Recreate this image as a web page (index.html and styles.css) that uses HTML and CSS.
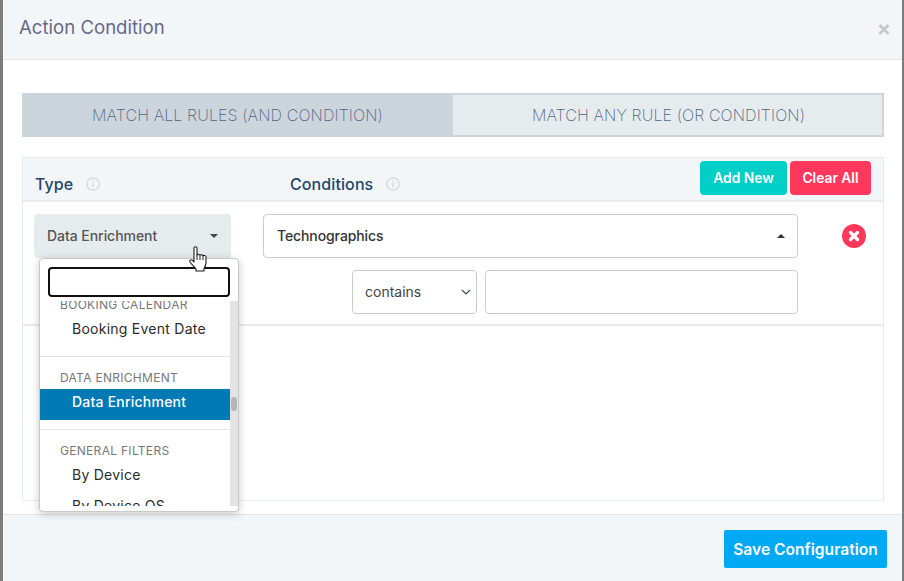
FILE: index.html
```html
<!DOCTYPE html>
<html lang="en">
<head>
<meta charset="utf-8">
<title>Action Condition</title>
<link rel="stylesheet" href="styles.css">
</head>
<body>
<div class="modal">
  <header class="modal-header">
    <h1 class="modal-title">Action Condition</h1>
    <span class="modal-close">×</span>
  </header>
  <main class="modal-body">
    <div class="tabs">
      <div class="tab tab-active">MATCH ALL RULES (AND CONDITION)</div>
      <div class="tab tab-idle">MATCH ANY RULE (OR CONDITION)</div>
    </div>
    <section class="panel">
      <div class="panel-head">
        <div class="col-type"><span class="col-label">Type</span><svg class="info" viewBox="0 0 14 14"><circle cx="7" cy="7" r="6.2" fill="none" stroke="#cfd7de" stroke-width="1.3"/><rect x="6.3" y="6" width="1.4" height="4.4" fill="#cfd7de"/><rect x="6.3" y="3.6" width="1.4" height="1.4" fill="#cfd7de"/></svg></div>
        <div class="col-cond"><span class="col-label">Conditions</span><svg class="info" viewBox="0 0 14 14"><circle cx="7" cy="7" r="6.2" fill="none" stroke="#cfd7de" stroke-width="1.3"/><rect x="6.3" y="6" width="1.4" height="4.4" fill="#cfd7de"/><rect x="6.3" y="3.6" width="1.4" height="1.4" fill="#cfd7de"/></svg></div>
        <div class="head-actions">
          <button class="btn btn-add">Add New</button>
          <button class="btn btn-clear">Clear All</button>
        </div>
      </div>
      <div class="rule">
        <div class="type-select"><span>Data Enrichment</span><i class="caret-down"></i></div>
        <div class="rule-main">
          <div class="cond-select"><span>Technographics</span><i class="caret-up"></i></div>
          <div class="cond-sub">
            <div class="op-select"><span>contains</span><svg class="chev" viewBox="0 0 10 6"><path d="M1 1l4 4 4-4" fill="none" stroke="#2f4f4f" stroke-width="1.1"/></svg></div>
            <div class="value-input"></div>
          </div>
        </div>
        <div class="rule-del"><svg viewBox="0 0 24 24"><circle cx="12" cy="12" r="12" fill="#ff385c"/><path d="M8.500 8.500l7 7M15.500 8.500l-7 7" stroke="#fff" stroke-width="3.200" stroke-linecap="round"/></svg></div>
      </div>
    </section>
  </main>
  <footer class="modal-footer">
    <button class="btn-save">Save Configuration</button>
  </footer>
</div>

<div class="menu">
  <div class="menu-search"></div>
  <div class="menu-scroll">
    <div class="menu-list">
      <div class="group-label group-first">BOOKING CALENDAR</div>
      <div class="item">Booking Event Date</div>
      <div class="divider"></div>
      <div class="group-label">DATA ENRICHMENT</div>
      <div class="item item-active">Data Enrichment</div>
      <div class="divider"></div>
      <div class="group-label">GENERAL FILTERS</div>
      <div class="item">By Device</div>
      <div class="item">By Device OS</div>
    </div>
    <div class="scrollbar"><div class="thumb"></div></div>
  </div>
</div>

<svg class="cursor" viewBox="0 0 18 27"><path d="M5 2c0-1.600 3-1.600 3 0v7c.6-1 2.400-1 3 .3.600-.8 2.400-.8 3 .4.600-.6 3-.5 3 1.300v6c0 2-1 4-2 5.500V25H7v-2C5.500 21 3 19 1 16c-.9-1.500.8-3 2.400-1.800L5 16z" fill="#fff" stroke="#1c1c1c" stroke-width="1.100" stroke-linejoin="round"/><path d="M8 9v5M11 9.300V14M14 9.700V14" stroke="#1c1c1c" stroke-width="1" fill="none"/></svg>
</body>
</html>
```
FILE: styles.css
```css
* { box-sizing: border-box; }
html, body { margin: 0; padding: 0; }
body {
  width: 904px;
  height: 581px;
  overflow: hidden;
  background: #7c7c7c;
  font-family: Inter, "Liberation Sans", sans-serif;
  padding: 0 2px 0 3px;
  position: relative;
}
.modal {
  height: 581px;
  background: #fff;
  display: flex;
  flex-direction: column;
}
.modal-header {
  height: 60px;
  flex: none;
  background: #f3f6f8;
  border-bottom: 1px solid #e4e7ea;
  display: flex;
  align-items: center;
  justify-content: space-between;
  padding: 0 11px 5px 16px;
}
.modal-title {
  margin: 0;
  font-size: 18.6px;
  font-weight: 400;
  color: #68688a;
}
.modal-close {
  font-size: 21px;
  font-weight: 700;
  color: #c8c8c8;
  line-height: 1;
  margin-top: 3px;
}
.modal-body {
  flex: 1;
  padding: 33px 18px 13px 19px;
  display: flex;
  flex-direction: column;
  gap: 20px;
}
.tabs {
  display: flex;
  height: 44px;
  flex: none;
}
.tab {
  display: flex;
  align-items: center;
  justify-content: center;
  font-size: 16px;
  font-weight: 200;
  letter-spacing: .1px;
  color: #4f6585;
}
.tab-active {
  width: 431px;
  background: #cdd5dc;
}
.tab-idle {
  flex: 1;
  background: #e6ebee;
  border: 2px solid #cdd5dc;
  border-left-width: 0;
  padding-left: 2px;
}
.panel {
  flex: 1;
  border: 1px solid #e6ebee;
  display: flex;
  flex-direction: column;
}
.panel-head {
  height: 44px;
  flex: none;
  background: #f3f6f8;
  border-bottom: 2px solid #e6ebee;
  display: flex;
  position: relative;
}
.col-type, .col-cond {
  display: flex;
  align-items: center;
  gap: 13px;
  padding-top: 10px;
}
.col-type { width: 267px; padding-left: 12px; }
.col-cond { width: 401px; }
.col-label {
  font-size: 16px;
  font-weight: 500;
  letter-spacing: .1px;
  color: #24456b;
}
.info { width: 14px; height: 14px; display: block; }
.head-actions {
  display: flex;
  gap: 3px;
  padding-top: 3px;
  margin-left: 9px;
}
.btn {
  border: 0;
  height: 34px;
  border-radius: 4px;
  color: #fff;
  font: 600 13.8px Inter, "Liberation Sans", sans-serif;
  padding: 0;
}
.btn-add { width: 87px; background: #00cfc8; }
.btn-clear { width: 81px; background: #ff385c; }
.rule {
  height: 124px;
  flex: none;
  border-bottom: 2px solid #e6ebee;
  display: flex;
  padding: 12px 0 0 11px;
}
.type-select {
  width: 197px;
  height: 44px;
  background: #e6ebee;
  border-radius: 4px;
  display: flex;
  align-items: center;
  justify-content: space-between;
  padding: 0 13px 1px;
  font-size: 14px;
  font-weight: 500;
  letter-spacing: -.05px;
  color: #555;
}
.caret-down, .caret-up {
  width: 0;
  height: 0;
  border-left: 4px solid transparent;
  border-right: 4px solid transparent;
}
.caret-down { border-top: 4px solid #444; }
.caret-up { border-bottom: 4px solid #333; }
.rule-main {
  width: 535px;
  margin-left: 32px;
  display: flex;
  flex-direction: column;
  gap: 12px;
}
.cond-select {
  height: 44px;
  border: 1px solid #ccc;
  border-radius: 4px;
  display: flex;
  align-items: center;
  justify-content: space-between;
  padding: 0 12px 1px 13px;
  font-size: 14px;
  font-weight: 500;
  letter-spacing: -.1px;
  color: #333;
}
.cond-sub {
  display: flex;
  gap: 8px;
  padding-left: 89px;
}
.op-select {
  width: 125px;
  height: 44px;
  border: 1px solid #ccc;
  border-radius: 4px;
  display: flex;
  align-items: center;
  justify-content: space-between;
  padding: 0 5px 1px 12px;
  font-size: 14px;
  color: #444;
}
.chev { width: 10px; height: 6px; display: block; }
.value-input {
  flex: 1;
  height: 44px;
  border: 1px solid #ccc;
  border-radius: 4px;
}
.rule-del { margin: 10px 0 0 44px; }
.rule-del svg { width: 24px; height: 24px; display: block; }
.modal-footer {
  height: 67px;
  flex: none;
  background: #f3f6f8;
  border-top: 1px solid #e4e7ea;
  display: flex;
  justify-content: flex-end;
  padding: 15px 15px 0 0;
}
.btn-save {
  width: 163px;
  height: 38px;
  border: 0;
  border-radius: 2px;
  background: #00a9f4;
  color: #fff;
  font: 600 15.6px Inter, "Liberation Sans", sans-serif;
  padding: 0;
}
.menu {
  position: absolute;
  left: 39px;
  top: 258px;
  width: 200px;
  height: 254px;
  background: #fff;
  border: 1px solid #c8c8c8;
  border-radius: 4px;
  box-shadow: 0 2px 8px rgba(0,0,0,.22);
  padding: 8px 0 5px;
  display: flex;
  flex-direction: column;
  gap: 4px;
}
.menu-search {
  width: 182px;
  height: 30px;
  margin-left: 8px;
  flex: none;
  border: 2px solid #111;
  border-radius: 4px;
  background: #fff;
}
.menu-scroll {
  flex: 1;
  display: flex;
  overflow: hidden;
}
.menu-list {
  width: 190px;
  overflow: hidden;
  margin-top: -4px;
}
.group-label {
  font-size: 12px;
  font-weight: 400;
  letter-spacing: .3px;
  color: #777;
  padding: 13px 0 4px 20px;
  line-height: 15px;
}
.group-first { padding-top: 0; }
.item {
  height: 31px;
  line-height: 26px;
  padding-left: 32px;
  font-size: 14px;
  font-weight: 400;
  color: #2b2b2b;
  letter-spacing: .25px;
}
.item-active { background: #007ab5; color: #fff; font-weight: 500; letter-spacing: .22px; }
.divider {
  height: 1px;
  background: #e4e4e4;
  margin-top: 9px;
}
.scrollbar {
  width: 8px;
  background: #e3e3e5;
  position: relative;
}
.thumb {
  position: absolute;
  left: 1px;
  top: 96px;
  width: 6px;
  height: 14px;
  border-radius: 3px;
  background: #b5b5b8;
}
.cursor {
  position: absolute;
  left: 189px;
  top: 246px;
  width: 18px;
  height: 27px;
}
```
